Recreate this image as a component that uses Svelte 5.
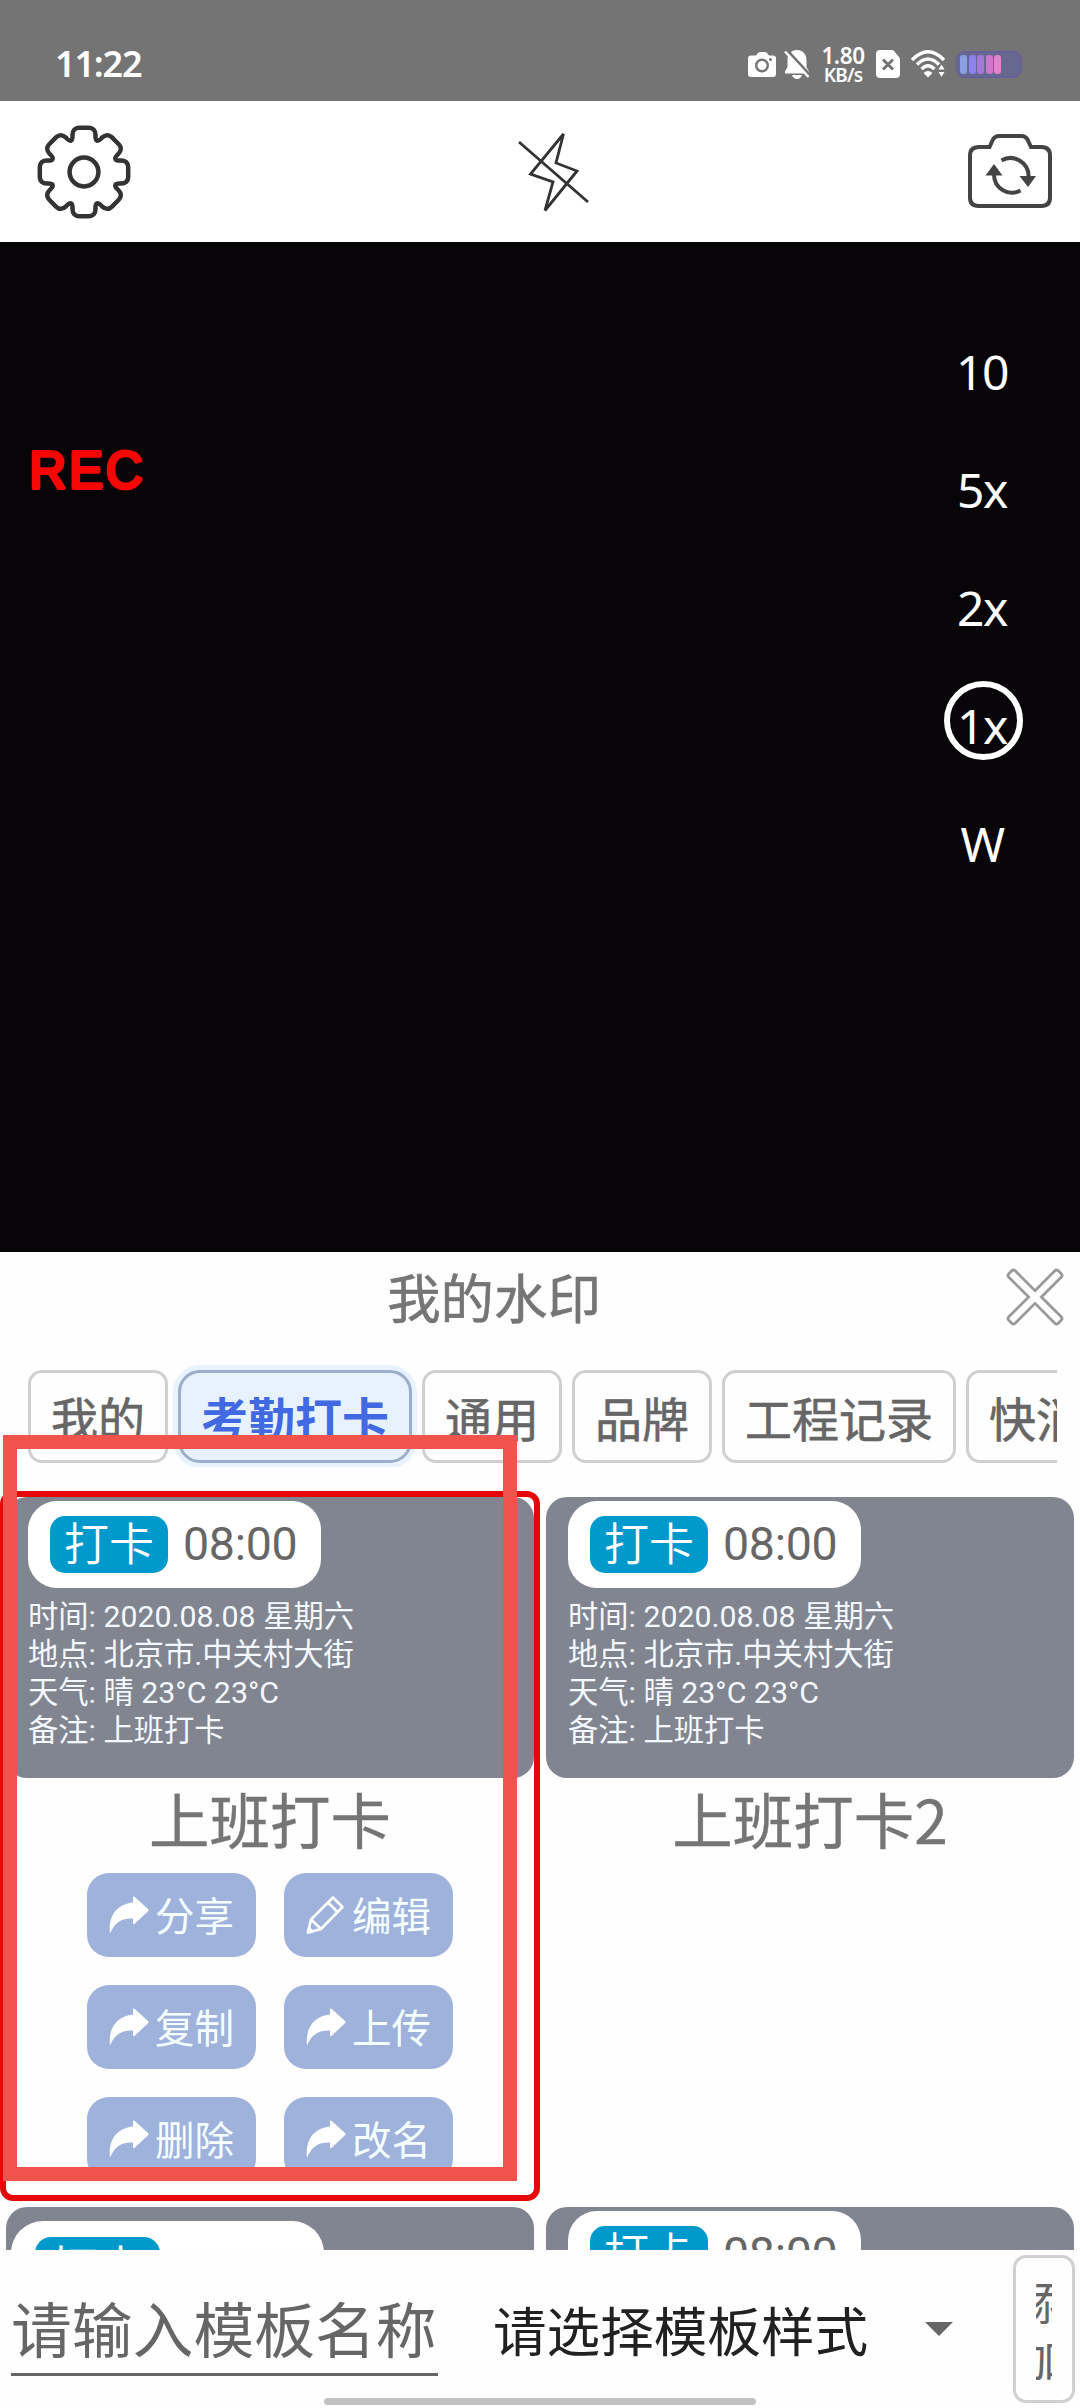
<script>
  const zooms = ['10', '5x', '2x', '1x', 'W'];
  const activeZoom = '1x';

  const tabs = ['我的', '考勤打卡', '通用', '品牌', '工程记录', '快消'];
  const activeTab = '考勤打卡';

  const lines = ['时间: 2020.08.08 星期六', '地点: 北京市.中关村大街', '天气: 晴 23°C 23°C', '备注: 上班打卡'];

  const templates = [
    { name: '上班打卡', selected: true, large: false },
    { name: '上班打卡2', selected: false, large: false },
    { name: '', selected: false, large: true },
    { name: '', selected: false, large: false }
  ];

  const actions = [
    { label: '分享', icon: 'share' },
    { label: '编辑', icon: 'edit' },
    { label: '复制', icon: 'share' },
    { label: '上传', icon: 'share' },
    { label: '删除', icon: 'share' },
    { label: '改名', icon: 'share' }
  ];

  const cells = ['#8a9fe0', '#8d83ee', '#a678dc', '#cf77cf', '#e880cc'];

  // Outline of an eight-toothed gear: one tooth rotated round the centre.
  function gearPath() {
    let d = '';
    for (let k = 0; k < 8; k++) {
      const a = (k * Math.PI) / 4;
      const p = (x, y) =>
        (x * Math.cos(a) - y * Math.sin(a)).toFixed(2) + ' ' + (x * Math.sin(a) + y * Math.cos(a)).toFixed(2);
      if (k === 0) d += 'M' + p(-13, -31.4);
      d += 'C' + p(-11.2, -32.2) + ' ' + p(-11.5, -34) + ' ' + p(-11.5, -37);
      d += 'C' + p(-11.5, -41.5) + ' ' + p(-9, -44.2) + ' ' + p(-5, -44.2);
      d += 'L' + p(5, -44.2);
      d += 'C' + p(9, -44.2) + ' ' + p(11.5, -41.5) + ' ' + p(11.5, -37);
      d += 'C' + p(11.5, -34) + ' ' + p(11.2, -32.2) + ' ' + p(13, -31.4);
    }
    return d + 'Z';
  }
  const gear = gearPath();
</script>

<div class="screen">
  <header class="status">
    <span class="clock">11:22</span>
    <div class="indicators">
      <svg class="i-cam" width="28" height="25" viewBox="0 0 28 25">
        <path fill="#fff" d="M3 3.5H8L10 1Q10.8 0 12 0H17Q18.200 0 19 1L21 3.500H25Q28 3.500 28 6.500V22Q28 25 25 25H3Q0 25 0 22V6.500Q0 3.500 3 3.500Z" />
        <circle cx="14" cy="13.500" r="5.800" fill="none" stroke="#747474" stroke-width="2.400" />
        <circle cx="22.500" cy="7.500" r="1.500" fill="#747474" />
      </svg>
      <svg class="i-bell" width="26" height="29" viewBox="0 0 26 29">
        <path fill="#fff" d="M13 0c6 0 9.500 4.500 9.500 10v7l2.500 4.500v2H1v-2L3.500 17v-7C3.500 4.500 7 0 13 0zM8 25h10q-1.500 4-5 4t-5-4z" />
        <path stroke="#747474" stroke-width="2.600" d="M3 0L27 26" />
        <path stroke="#fff" stroke-width="2.400" d="M1 1.500L24.500 27" />
      </svg>
      <div class="speed"><span class="rate">1.80</span><span class="unit">KB/s</span></div>
      <svg class="i-sim" width="24" height="28" viewBox="0 0 24 28">
        <path fill="#fff" d="M4 0h11.500q1.500 0 2.500 1l5 6q1 1 1 3v14q0 4-4 4H4q-4 0-4-4V4q0-4 4-4z" />
        <path stroke="#747474" stroke-width="3" d="M7 9.500l10 10M17 9.500l-10 10" />
      </svg>
      <svg class="i-wifi" width="35" height="28" viewBox="0 0 35 28">
        <g fill="none" stroke="#fff" stroke-width="3.400">
          <path d="M1 10Q17 -6.500 33 10" />
          <path d="M6 14.500Q17 3.500 28 14.500" />
          <path d="M10.500 19Q17 12.500 23.500 19" />
        </g>
        <path fill="#fff" d="M12.500 23Q17 19 21.500 23L17 27.500z" />
        <path fill="#fff" stroke="#747474" stroke-width="1.200" d="M30.500 13.500l4 6.500h-8zM30.500 28l-4-6.500h8z" />
      </svg>
      <div class="battery">
        {#each cells as c}<i style:background={c}></i>{/each}
      </div>
    </div>
  </header>

  <nav class="toolbar">
    <svg width="94" height="94" viewBox="-47 -47 94 94" fill="none" stroke="#333" stroke-width="4.500">
      <path d={gear} />
      <circle r="14.400" />
    </svg>
    <svg class="flash" width="72" height="82" viewBox="519 130 72 82" fill="none" stroke="#333" stroke-width="2.800">
      <path d="M564.500 133L531.500 173L554 181L546 209.500L578 170L557 162z" />
      <path d="M520 141L589 201" />
    </svg>
    <svg class="switch" width="84" height="76" viewBox="968 133 84 76" fill="none" stroke="#444" stroke-width="4">
      <path d="M979 147H989.500L993 139.500Q995 136 999 136H1021.500Q1025.500 136 1027.500 139.500L1031 147H1041.500Q1050 147 1050 155.500V197.500Q1050 206 1041.500 206H978.500Q970 206 970 197.500V155.500Q970 147 979 147z" />
      <path d="M1001.500 160.500A18 18 0 0 1 1028.500 177M1020.500 190.500A18 18 0 0 1 994 175" />
      <path fill="#444" stroke="none" d="M1019.500 176H1036L1028 187zM985.500 175.500H1002.500L994 164z" />
    </svg>
  </nav>

  <section class="viewfinder">
    <svg class="rec" width="130" height="56" viewBox="0 0 130 56">
      <text x="1.500" y="44.500">REC</text>
    </svg>
    <ul class="zooms">
      {#each zooms as z}
        <li class:current={z === activeZoom}><span>{z}</span></li>
      {/each}
    </ul>
  </section>

  <section class="panel">
    <div class="panel-head">
      <h1>我的水印</h1>
      <svg width="58" height="58" viewBox="-29 -29 58 58" fill="none" stroke="#999" stroke-width="2.800">
        <path transform="rotate(45)" d="M-4.500 -4.500V-32.500Q-4.500 -35 -2 -35H2Q4.500 -35 4.500 -32.500V-4.500H32.500Q35 -4.500 35 -2V2Q35 4.500 32.500 4.500H4.500V32.500Q4.500 35 2 35H-2Q-4.500 35 -4.500 32.500V4.500H-32.500Q-35 4.500 -35 2V-2Q-35 -4.500 -32.500 -4.500z" />
      </svg>
    </div>
    <div class="tabs">
      {#each tabs as t}
        <button class="tab" class:active={t === activeTab}>{t}</button>
      {/each}
    </div>

    <div class="grid">
      {#each templates as t}
        <article class="template" class:selected={t.selected}>
          <div class="preview" class:large={t.large}>
            <div class="pill"><span class="badge">打卡</span><span class="hour">08:00</span></div>
            {#if t.name}
              <div class="lines">
                {#each lines as l}<p>{l}</p>{/each}
              </div>
            {/if}
          </div>
          {#if t.name}<h2>{t.name}</h2>{/if}
          {#if t.selected}
            <div class="actions">
              {#each actions as a}
                <button class="action">
                  {#if a.icon === 'edit'}
                    <svg width="40" height="38" viewBox="0 0 40 38" fill="none" stroke="#fff" stroke-width="2.600" stroke-linejoin="round">
                      <path d="M27 1.500L36.500 11L15 33L2 36.500L5 23.500zM22 6.500L31.500 16M5 23.500L15 33" />
                      <path fill="#fff" d="M3 32l3.500 3.500l-4.500 1z" />
                    </svg>
                  {:else}
                    <svg width="40" height="38" viewBox="0 0 40 38">
                      <path fill="#fff" d="M24 1.500Q24 0 25.500 .8L39 13Q40 14.200 39 15.300L25.500 28Q24 29 24 27V22.500C14 22 6 25.500 1 37.500C-1 20 8 8 24 6.500z" />
                    </svg>
                  {/if}
                  <span>{a.label}</span>
                </button>
              {/each}
            </div>
          {/if}
        </article>
      {/each}
    </div>
  </section>

  <footer class="footer">
    <div class="field">请输入模板名称</div>
    <div class="select">
      <span>请选择模板样式</span>
      <i class="caret"></i>
    </div>
    <button class="add"><span><b>添</b><b>加</b></span></button>
    <div class="home"></div>
  </footer>

  <div class="highlight"></div>
</div>

<style>
  :global(body) { margin: 0; background: #fff; }
  *, *::before { box-sizing: border-box; }
  h1, h2, p, ul { margin: 0; padding: 0; font-weight: 400; list-style: none; }
  button { padding: 0; margin: 0; font-family: inherit; background: none; }
  svg { display: block; flex: none; }
  .screen {
    position: relative; width: 1080px; height: 2408px; overflow: hidden;
    display: flex; flex-direction: column; background: #fefefe;
    font-family: 'Noto Sans CJK SC', 'Noto Sans', sans-serif;
  }

  .status { height: 101px; flex: none; background: #747474; color: #fff; display: flex; justify-content: space-between; padding: 27px 58px 0 55px; font-family: 'Noto Sans', sans-serif; }
  .clock { font-size: 36px; font-weight: 600; line-height: 74px; height: 74px; letter-spacing: -1.200px; }
  .indicators { display: flex; align-items: center; height: 74px; }
  .i-bell { margin-left: 8px; }
  .speed { display: flex; flex-direction: column; align-items: center; width: 42px; margin: 2px 12px 0 12px; font-weight: 600; }
  .rate { font-size: 22.500px; line-height: 21px; letter-spacing: -.4px; }
  .unit { font-size: 19px; line-height: 19px; letter-spacing: -.8px; }
  .i-wifi { margin-left: 11px; }
  .battery { width: 66px; height: 27px; margin-left: 10px; border-radius: 9px; background: #67688f; border: 2px solid #66609a; padding: 2px 2px; display: flex; gap: 1.500px; }
  .battery i { width: 7px; height: 19px; border-radius: 3px; }

  .toolbar { height: 141px; flex: none; display: flex; align-items: center; justify-content: space-between; padding: 0 28px 0 37px; background: #fff; }
  .flash { margin-left: 8px; }
  .switch { margin-top: -2px; }

  .viewfinder { height: 1010px; flex: none; background: #080508; display: flex; justify-content: space-between; padding: 71px 38px 0 28px; }
  .rec { margin-top: 130px; }
  .rec text { font: 400 51px 'Liberation Sans', sans-serif; letter-spacing: 2.800px; fill: #f80606; stroke: #f80606; stroke-width: 3.800px; stroke-linejoin: round; stroke-linecap: round; }
  .zooms { width: 118px; color: #fff; font: 400 48px/118px 'Noto Sans', sans-serif; letter-spacing: -1.500px; }
  .zooms li { height: 118px; display: flex; justify-content: center; align-items: center; position: relative; padding-right: 2px; }
  .zooms .current::before { content: ''; position: absolute; left: 20px; top: 14px; width: 79px; height: 79px; border: 6px solid #fff; border-radius: 50%; }

  .panel { height: 998px; flex: none; overflow: hidden; }
  .panel-head { height: 88px; display: flex; align-items: center; padding-right: 16px; }
  .panel-head svg { margin-top: 2px; }
  h1 { flex: 1; text-align: center; font-size: 53.400px; line-height: 88px; color: #757575; padding-right: 18px; -webkit-text-stroke: .6px #757575; }
  .tabs { height: 127px; margin: 0 23px 0 23px; padding: 30px 0 4px 5px; display: flex; gap: 10px; overflow: hidden; }
  .tab { height: 93px; flex: none; padding: 0 20px; border: 3px solid #d0d0d0; border-radius: 14px; font-size: 47px; line-height: 87px; color: #666; -webkit-text-stroke: .6px #666; }
  .tab.active { border-color: #9badc9; border-radius: 22px; background: #e8f2ff; color: #4169e1; font-weight: 700; -webkit-text-stroke: 0; box-shadow: 0 0 0 5px #e9f3ff; }

  .grid { display: grid; grid-template-columns: 540px 540px; grid-template-rows: 710px 710px; margin-top: 24px; }
  .template { height: 710px; padding: 6px; overflow: hidden; }
  .template.selected { padding: 0; border: 6px solid #e60808; border-radius: 13px; }
  .preview { height: 281px; border-radius: 21px; background: #80858f; padding: 4px 22px; }
  .pill { width: 293px; height: 87px; border-radius: 29px; background: #fff; padding: 15px 22px; display: flex; align-items: center; }
  .badge { width: 118px; height: 57px; border-radius: 15px; background: #09c; color: #fff; text-align: center; font-size: 45px; line-height: 52px; font-weight: 350; }
  .hour { font: 400 46.500px/57px Roboto, sans-serif; color: #666; margin-left: 15px; letter-spacing: -.3px; }
  .lines { margin-top: 10px; color: #f4f8ff; font: 300 30.300px/38px Roboto, 'Noto Sans CJK SC', sans-serif; white-space: nowrap; }
  .preview.large { padding: 14px 5px; }
  .large .pill { width: 313px; height: 93px; padding: 16px 24px; border-radius: 32px; }
  .large .badge { width: 125px; height: 61px; font-size: 48px; line-height: 56px; border-radius: 16px; }
  .large .hour { font-size: 49px; }
  h2 { text-align: center; font-size: 60.500px; line-height: 80px; height: 80px; color: #757575; -webkit-text-stroke: .4px #757575; }
  .actions { display: grid; grid-template-columns: 169px 169px; grid-auto-rows: 84px; gap: 28px; justify-content: center; margin-top: 15px; }
  .action { border: 0; border-radius: 22px; background: #9eb2dc; color: #f6ffff; display: flex; align-items: center; padding: 0 0 0 22px; font-size: 39.500px; }
  .action svg { margin-top: -1px; }
  .action span { margin-left: 6px; line-height: 81px; height: 84px; }

  .footer { flex: 1; display: flex; align-items: flex-start; position: relative; padding: 5px 5px 0 11px; }
  .field { width: 427px; height: 121px; border-bottom: 3px solid #666; color: #666; font-size: 60.800px; line-height: 144px; white-space: nowrap; overflow: hidden; }
  .select { flex: 1; display: flex; align-items: center; height: 148px; margin-left: 55px; font-size: 53.600px; color: #212121; }
  .select span { white-space: nowrap; line-height: 148px; }
  .caret { margin-left: 57px; border: 14px solid transparent; border-top-color: #666; border-bottom: 0; }
  .add { width: 62px; height: 148px; border: 3px solid #d0d0d0; border-radius: 13px; padding: 0; color: #666; }
  .add span { display: flex; flex-direction: column; align-items: center; overflow: hidden; width: 16px; margin: 0 auto; }
  .add b { font-weight: 400; font-size: 45px; line-height: 57px; white-space: nowrap; }
  .home { position: absolute; left: 324px; bottom: 3px; width: 432px; height: 7px; border-radius: 4px; background: #c1c1c1; }

  /* Marker frame drawn over the selected template */
  .highlight { position: absolute; left: 3px; top: 1435px; width: 514px; height: 746px; border: 14px solid #f0524c; }
</style>
